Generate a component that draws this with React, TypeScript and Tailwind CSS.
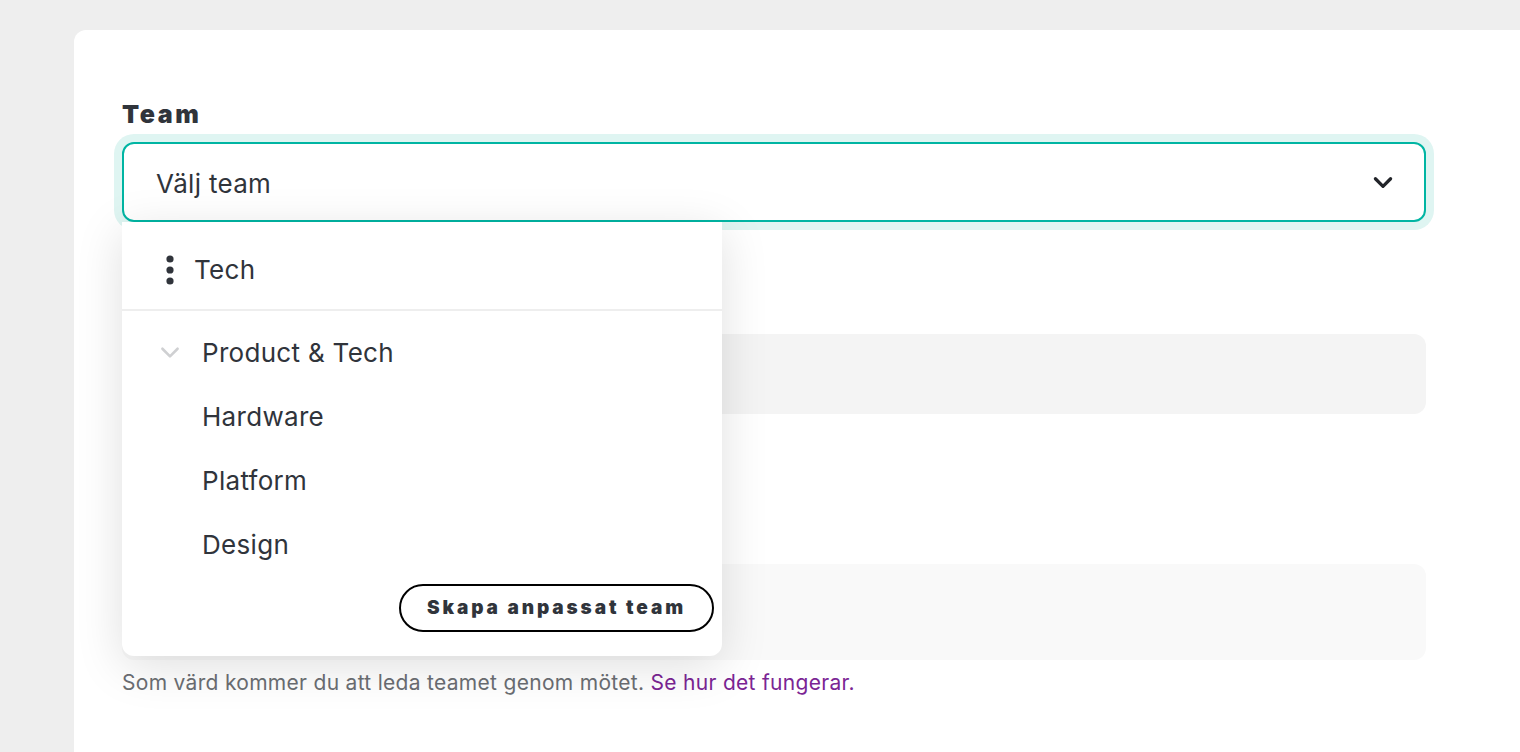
import React from "react";

const font = { fontFamily: "Inter, 'Noto Sans', sans-serif" };

function Chevron({ className, color, w = 3 }: { className?: string; color: string; w?: number }) {
  return (
    <svg viewBox="0 0 24 24" className={className} fill="none" stroke={color} strokeWidth={w} strokeLinecap="round" strokeLinejoin="round">
      <path d="M5 9l7 7 7-7" />
    </svg>
  );
}

export default function App() {
  return (
    <div className="min-h-[752px] w-full bg-[#eeeeee] pl-[74px] pt-[30px] overflow-hidden" style={font}>
      <div className="bg-white rounded-tl-[12px] min-h-[722px] pl-[48px] pt-[64px]">
        <div className="w-[1304px] relative">
          <div className="text-[25px] leading-[40px] font-black tracking-[2.6px] text-[#30343b] mb-[8px]">Team</div>
          <div className="relative">
            <div className="absolute -inset-[8px] rounded-[20px] bg-[#dff5f2]" />
            <div className="relative h-[80px] rounded-[12px] border-2 border-[#00b5a3] bg-white flex items-center justify-between pl-[32px] pr-[28px]">
              <span className="text-[26px] tracking-[0.3px] text-[#30343b] pt-[2px]">Välj team</span>
              <Chevron className="w-[26px] h-[26px]" color="#222429" w={3} />
            </div>
          </div>

          <div className="h-[112px]" />
          <div className="h-[80px] rounded-[12px] bg-[#f4f4f4]" />
          <div className="h-[150px]" />
          <div className="h-[96px] rounded-[12px] bg-[#f9f9f9]" />
          <div className="mt-[11px] text-[21px] leading-[24px] tracking-[0.3px] text-[#6b6e73]">
            Som värd kommer du att leda teamet genom mötet.{" "}
            <span className="text-[#7b2594]">Se hur det fungerar.</span>
          </div>

          <div className="absolute left-0 top-[128px] w-[600px] bg-white rounded-b-[12px] shadow-[0_10px_48px_rgba(0,0,0,0.13)] pb-[24px]">
            <div className="h-[89px] flex items-center pl-[44px] pt-[8px] border-b-2 border-[#eeeeee]">
              <svg width="8" height="30" viewBox="0 0 8 30" className="mr-[20px]">
                <circle cx="4" cy="4" r="3.6" fill="#30343b" />
                <circle cx="4" cy="15" r="3.6" fill="#30343b" />
                <circle cx="4" cy="26" r="3.6" fill="#30343b" />
              </svg>
              <span className="text-[26px] tracking-[0.3px] text-[#30343b]">Tech</span>
            </div>
            <div className="pt-[9px]">
              <div className="h-[64px] flex items-center pl-[35px]">
                <Chevron className="w-[26px] h-[26px] mr-[19px]" color="#cfd0d2" w={2.4} />
                <span className="text-[26px] tracking-[0.3px] text-[#30343b]">Product &amp; Tech</span>
              </div>
              {["Hardware", "Platform", "Design"].map((t) => (
                <div key={t} className="h-[64px] flex items-center pl-[80px]">
                  <span className="text-[26px] tracking-[0.3px] text-[#30343b]">{t}</span>
                </div>
              ))}
            </div>
            <div className="flex justify-end pr-[8px] pt-[8px]">
              <button className="h-[48px] w-[315px] rounded-full border-2 border-black text-[19px] font-black tracking-[2.9px] text-[#30343b] bg-white">
                Skapa anpassat team
              </button>
            </div>
          </div>
        </div>
      </div>
    </div>
  );
}
